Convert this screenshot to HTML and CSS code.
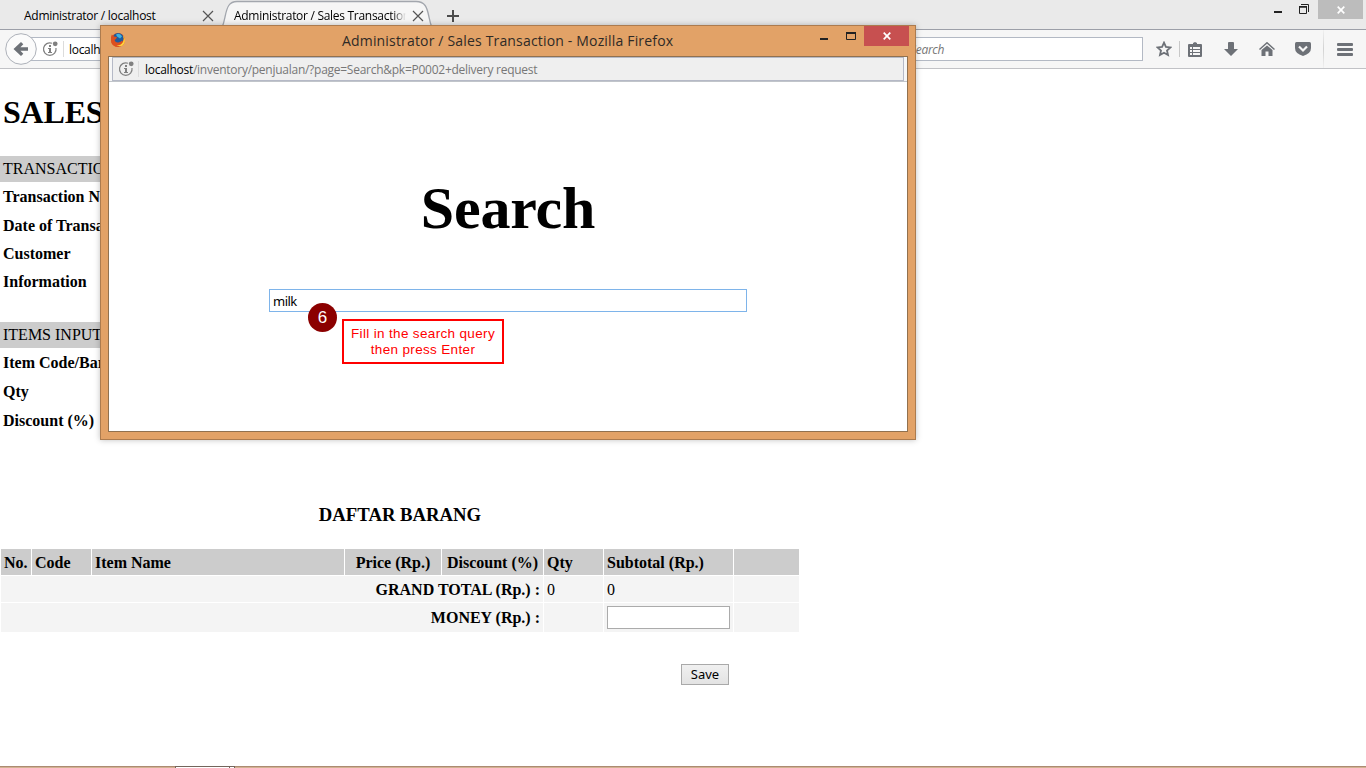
FILE: index.html
```html
<!DOCTYPE html>
<html lang="en">
<head>
<meta charset="utf-8">
<title>Administrator / Sales Transaction</title>
<link rel="stylesheet" href="styles.css">
</head>
<body>
<svg class="defs" width="0" height="0">
  <symbol id="info" viewBox="0 0 16 16">
    <path d="M10 2.200A6.300 6.300 0 1 0 14 7" fill="none" stroke="#808080" stroke-width="1.200"/>
    <circle cx="13.200" cy="2.800" r="2.400" fill="#808080"/>
    <path d="M7 4h2v2H7zM6 7h3v4h1v1H6v-1h1V8H6z" fill="#808080"/>
  </symbol>
  <symbol id="cross" viewBox="0 0 12 12"><path d="M1 1l10 10M11 1L1 11" stroke="#555" stroke-width="1.200"/></symbol>
  <symbol id="wclose" viewBox="0 0 8 8"><path d="M.7.7l6.600 6.600M7.300.7L.7 7.300" stroke="#fff" stroke-width="1.700"/></symbol>
</svg>
<div class="screen">
  <header class="tabs">
    <div class="tab"><span class="tab-text first">Administrator / localhost</span><svg class="x" width="12" height="12"><use href="#cross"/></svg></div>
    <div class="tab active">
      <svg class="tab-shape" width="222" height="30" viewBox="0 0 222 30"><path d="M0 30C6 29 6.500 24 8 17C10 7 12 1.500 20 1.500H199C208 1.500 210 7 212 17C213.500 24 214 29 220 30" fill="#f6f6f6" stroke="#a3a7ae" stroke-width="1.300"/></svg>
      <span class="tab-text second">Administrator / Sales Transaction</span>
      <svg class="x" width="12" height="12"><use href="#cross"/></svg>
    </div>
    <svg class="plus" width="12" height="12"><path d="M6 0v12M0 6h12" stroke="#4c4c4c" stroke-width="2"/></svg>
    <div class="controls">
      <svg width="8" height="2"><path d="M0 0h8v2H0z" fill="#222"/></svg>
      <svg class="restore" width="10" height="10"><path d="M2 .5h7.500v7.500" fill="none" stroke="#222"/><path d="M.5 3h7v6.500h-7z" fill="none" stroke="#222"/><path d="M0 2h8v1.500H0z" fill="#222"/></svg>
      <span class="close-main"><svg width="8" height="8"><use href="#wclose"/></svg></span>
    </div>
  </header>
  <nav class="toolbar">
    <svg class="back" width="34" height="34"><circle cx="16" cy="17" r="15.300" fill="#fbfbfb" stroke="#adb1b9"/><path d="M8.500 17l7.500-7 2.300 2.300-2.900 3h7.600v3.400h-7.600l2.900 3L16 24z" fill="#6d7177"/></svg>
    <div class="address"><svg width="16" height="16"><use href="#info"/></svg><i class="sep"></i><span class="localh">localhost/inventory/penjualan/</span></div>
    <div class="search"><span>Search</span></div>
    <div class="icons">
      <svg width="16" height="16"><path d="M8 1.700l1.900 4.200 4.500.5-3.400 3.100 1 4.500L8 11.700 4 14l1-4.500L1.600 6.400l4.500-.5z" fill="none" stroke="#6d7177" stroke-width="1.800"/></svg>
      <i class="sep"></i>
      <svg width="14" height="15"><path d="M5 2V1l2-1 2 1v1h4q1 0 1 1v11q0 1-1 1H1q-1 0-1-1V3q0-1 1-1z" fill="#6d7177"/><path d="M2 5h2v2H2zM5 5h7v2H5zM2 8h2v2H2zM5 8h7v2H5zM2 11h2v2H2zM5 11h7v2H5z" fill="#f6f6f6"/></svg>
      <svg width="14" height="14"><path d="M4 1q0-1 1-1h4q1 0 1 1v6h4l-7 7-7-7h4z" fill="#6d7177"/></svg>
      <svg class="home" width="16" height="14"><path d="M.5 7.500L8 .8l7.500 6.700" fill="none" stroke="#6d7177" stroke-width="1.500"/><path d="M2.500 8L8 3.500 13.500 8v6h-4V9.500h-3V14h-4z" fill="#6d7177"/></svg>
      <svg width="16" height="14"><path d="M1.500 0h13Q16 0 16 1.500V6q0 5.500-8 8Q0 11.500 0 6V1.500Q0 0 1.500 0z" fill="#6d7177"/><path d="M4 4.500l4 4 4-4" fill="none" stroke="#f6f6f6" stroke-width="2.200"/></svg>
      <i class="edge"></i>
      <svg class="menu" width="16" height="13"><g fill="#6d7177"><rect width="16" height="3" rx="1"/><rect y="5" width="16" height="3" rx="1"/><rect y="10" width="16" height="3" rx="1"/></g></svg>
    </div>
  </nav>
  <main class="page">
    <h1>SALES TRANSACTION</h1>
    <section class="form">
      <div class="bar">TRANSACTION</div>
      <div class="field">Transaction No.</div>
      <div class="field">Date of Transaction</div>
      <div class="field">Customer</div>
      <div class="field">Information</div>
    </section>
    <section class="form items">
      <div class="bar">ITEMS INPUT</div>
      <div class="field">Item Code/Barcode</div>
      <div class="field">Qty</div>
      <div class="field">Discount (%)</div>
    </section>
    <h3>DAFTAR BARANG</h3>
    <div class="grid">
      <b class="h">No.</b><b class="h">Code</b><b class="h">Item Name</b><b class="h center">Price (Rp.)</b><b class="h center">Discount (%)</b><b class="h">Qty</b><b class="h">Subtotal (Rp.)</b><b class="h"></b>
      <b class="total">GRAND TOTAL (Rp.) :</b><span>0</span><span>0</span><span></span>
      <b class="total last">MONEY (Rp.) :</b><span></span><span><input class="money" type="text"></span><span></span>
    </div>
    <button class="save">Save</button>
  </main>
  <footer class="task"><i></i><i class="small"></i></footer>

  <div class="popup">
    <div class="title">
      <svg class="fox" width="16" height="16" viewBox="0 0 16 16"><circle cx="8" cy="8" r="7" fill="#e0561f"/><circle cx="8.200" cy="6.300" r="5.400" fill="#1f5a9c"/><path d="M6 2.500q4-2 6 2l-2 2-3-2z" fill="#3fb0dc"/><path d="M1 5l.8-2.500L4 4.500l3 .5-1 2-1.500 1q1 3 4 2.500 2.500-.5 3.500-2l1.500 4-5 2.500Q1 14.500 1 8z" fill="#dc4f1f"/><path d="M13 3.500q1.500 3 0 6.500-2 3.500-6.500 3.500Q13 16 14.800 10q.6-4-1.800-6.500z" fill="#ffd23d"/></svg>
      <span class="title-text">Administrator / Sales Transaction - Mozilla Firefox</span>
      <svg class="min" width="8" height="2"><path d="M0 0h8v2H0z" fill="#222"/></svg>
      <svg class="max" width="10" height="8"><path d="M.5 1h9v6.500h-9z" fill="none" stroke="#222"/><path d="M0 0h10v2H0z" fill="#222"/></svg>
      <span class="close"><svg width="8" height="8"><use href="#wclose"/></svg></span>
    </div>
    <div class="body">
      <div class="urlbar"><div class="url"><svg width="16" height="16"><use href="#info"/></svg><i class="sep"></i><span class="url-text"><em>localhost</em>/inventory/penjualan/?page=Search&amp;pk=P0002+delivery request</span></div></div>
      <h2>Search</h2>
      <input class="query" type="text" value="milk">
    </div>
    <div class="step">6</div>
    <div class="note">Fill in the search query<br>then press Enter</div>
  </div>
</div>
</body>
</html>
```
FILE: styles.css
```css
* { box-sizing: border-box; }
body { margin: 0; overflow: hidden; background: #fff; }
svg { display: block; flex: none; }
.defs { position: absolute; }
.screen { position: relative; width: 1366px; height: 768px; overflow: hidden; display: flex; flex-direction: column; font-family: "Liberation Serif", serif; color: #000; }

.tabs { height: 30px; flex: none; display: flex; background: #eaeaea; border-bottom: 1px solid #9c9fa8; font: 12px/30px "Open Sans", sans-serif; }
.tab { display: flex; width: 220px; padding: 1px 0 0 24px; }
.tab-text { white-space: nowrap; overflow: hidden; flex: none; }
.tab .x { margin-top: 9px; }
.first { width: 178px; letter-spacing: -.27px; }
.active { position: relative; width: 226px; padding-left: 14px; }
.tab-shape { position: absolute; left: -3px; top: 0; }
.second { position: relative; width: 172px; letter-spacing: -.29px; -webkit-mask-image: linear-gradient(90deg, #000 92%, transparent); mask-image: linear-gradient(90deg, #000 92%, transparent); }
.active .x { position: relative; margin-left: 6px; }
.plus { margin: 10px 0 0 1px; }
.controls { margin-left: auto; display: flex; padding-right: 3px; }
.controls > svg:first-child { margin: 11px 17px 0 0; }
.restore { margin: 4px 9px 0 0; }
.close-main { width: 45px; height: 19px; background: #bcbcbc; display: flex; justify-content: center; align-items: center; }

.toolbar { height: 39px; flex: none; display: flex; background: #f6f6f6; border-bottom: 1px solid #c1c2c6; padding-left: 5px; font: 12px "Open Sans", sans-serif; }
.back { margin-top: 2px; position: relative; z-index: 1; }
.address { width: 560px; height: 24px; margin: 7px 0 0 -9px; border: 1px solid #b3b9c4; background: #fff; display: flex; align-items: center; padding-left: 11px; }
.sep { width: 1px; height: 16px; background: #dcdcdc; }
.address .sep { margin: 0 5px; }
.localh { letter-spacing: -.3px; }
.search { width: 443px; height: 24px; margin: 7px 0 0 110px; border: 1px solid #b3b9c4; background: #fff; padding: 3px 0 0 209px; color: #777; font-style: italic; letter-spacing: -.3px; }
.icons { display: flex; align-items: center; padding-left: 13px; }
.icons .sep { background: #c8c8c8; margin: 0 8px 0 7px; }
.icons svg + svg { margin-left: 22px; }
.icons .home { margin-left: 21px; }
.icons svg:nth-of-type(5) { margin-left: 20px; }
.icons .edge { align-self: stretch; width: 1px; margin: 0 13px 0 12px; background: linear-gradient(#f0f0f0, #d2d2d2 50%, #f0f0f0); }

.page { flex: 1; font-size: 16px; }
h1 { margin: 0; padding: 24px 0 0 3px; font-size: 32px; line-height: 38px; height: 87px; letter-spacing: -.2px; }
.form { width: 400px; }
.bar { height: 26px; line-height: 26px; background: #ccc; padding-left: 3px; margin-bottom: 1px; }
.field { height: 28.400px; line-height: 28.400px; padding-left: 3px; font-weight: bold; font-size: 16px; }
.form .field:nth-child(3) { position: relative; top: 1px; }
.items { margin-top: 25.400px; }
.items .bar { margin-bottom: 0; }
.items .field { height: 29px; line-height: 29px; }
.items .field:nth-child(3) { top: 0; }
h3 { margin: 66px 0 0; width: 800px; text-align: center; font-size: 18.720px; line-height: 28px; }
.grid { margin: 20px 0 0 1px; display: grid; gap: 1px; grid-template-columns: 30px 59px 252px 96px 101px 59px 129px 65px; grid-template-rows: 26px 26px 29px; line-height: 28px; }
.grid > * { background: #f4f4f4; padding: 0 3px; white-space: nowrap; font-size: 16px; }
.grid > .h { background: #ccc; }
.grid > .center { text-align: center; }
.grid > .total { grid-column: span 5; text-align: right; }
.grid > .last { line-height: 30px; }
.money { display: block; width: 123px; height: 23px; margin-top: 3px; border: 1px solid #ababab; background: #fff; }
.save { display: block; width: 48px; height: 21px; margin: 32px 0 0 681px; padding: 0; border: 1px solid #a9a9a9; background: linear-gradient(#f0f0f0, #e3e3e3); font: 13px "Noto Sans", sans-serif; color: #000; }
.task { height: 2px; flex: none; display: flex; padding-left: 175px; background: linear-gradient(#ac8a72 50%, #d2b292 50%); }
.task i { width: 55px; border: 1px solid #73655c; border-bottom: 0; background: #fff; }
.task .small { width: 5px; border-left: 0; }

.popup { position: absolute; left: 100px; top: 25px; width: 816px; height: 415px; background: #e2a267; border: 1px solid #ac7b4e; box-shadow: 0 0 6px rgba(0,0,0,.25); padding: 0 7px 7px; display: flex; flex-direction: column; }
.title { height: 30px; flex: none; display: flex; font-family: "Open Sans", sans-serif; color: #2f2a26; }
.fox { margin: 6px 0 0 2px; }
.title-text { width: 332px; margin-left: 216px; font-size: 14px; line-height: 30px; white-space: nowrap; letter-spacing: .17px; }
.min { margin: 12px 0 0 146px; }
.min, .max, .close { transform: translateX(1px); }
.max { margin: 6px 0 0 18px; }
.close { width: 45px; height: 20px; margin-left: 8px; background: #c75050; display: flex; justify-content: center; align-items: center; }
.body { flex: 1; border: 1px solid #91714f; background: #fff; display: flex; flex-direction: column; align-items: center; }
.urlbar { width: 100%; height: 25px; background: #f6f6f6; border-bottom: 1px solid #c1c5ca; padding: 0 3px; }
.url { height: 24px; border: 1px solid #b5b9c6; background: #efefef; display: flex; align-items: center; padding-left: 5px; font: 12px "Open Sans", sans-serif; color: #777; }
.url .sep { margin: 0 6px 0 4px; }
.url-text { white-space: nowrap; letter-spacing: -.26px; }
.url-text em { font-style: normal; color: #000; }
h2 { margin: 91px 0 0; font-size: 60px; line-height: 70px; letter-spacing: -.2px; }
.query { width: 478px; height: 23px; margin-top: 46px; border: 1px solid #7eb4ea; padding: 1px 3px 0; font: 13px "Noto Sans", sans-serif; letter-spacing: -.5px; color: #000; outline: 0; }
.step { position: absolute; left: 207px; top: 277px; width: 29px; height: 29px; border-radius: 50%; background: #8b0000; color: #fff; font: 17px/29px "Liberation Sans", sans-serif; text-align: center; }
.note { position: absolute; left: 241px; top: 293px; width: 162px; height: 45px; border: 2px solid #f00; background: #fff; color: #f00; font: 13.500px/16px "Liberation Sans", sans-serif; letter-spacing: .34px; padding-top: 5px; text-align: center; white-space: nowrap; }
```
